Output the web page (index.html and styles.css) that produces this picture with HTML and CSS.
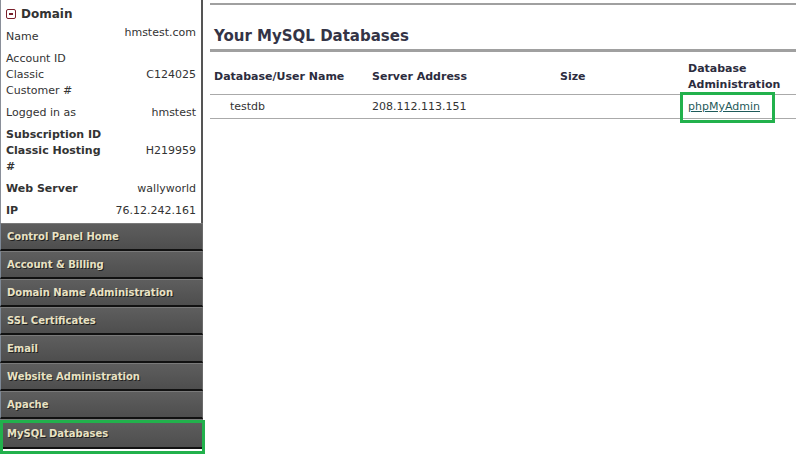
FILE: index.html
```html
<!DOCTYPE html>
<html lang="en">
<head>
    <meta charset="UTF-8">
    <title>MySQL Databases</title>
    <link rel="stylesheet" href="styles.css">
</head>
<body>
    <div class="page">
        <div class="sidebar">
            <!-- Account info box -->
            <div class="info">
                <div class="info-title">
                    <span class="toggle"></span>
                    Domain
                </div>
                <div class="row row-name">
                    <span class="label">Name</span>
                    <span class="value">hmstest.com</span>
                </div>
                <div class="row">
                    <span class="label">Account ID<br>Classic<br>Customer #</span>
                    <span class="value">C124025</span>
                </div>
                <div class="row">
                    <span class="label">Logged in as</span>
                    <span class="value">hmstest</span>
                </div>
                <div class="row">
                    <span class="label bold">Subscription ID<br>Classic Hosting<br>#</span>
                    <span class="value">H219959</span>
                </div>
                <div class="row">
                    <span class="label bold">Web Server</span>
                    <span class="value">wallyworld</span>
                </div>
                <div class="row">
                    <span class="label bold">IP</span>
                    <span class="value">76.12.242.161</span>
                </div>
            </div>

            <!-- Navigation -->
            <div class="menu">
                <a class="menu-item" href="#">Control Panel Home</a>
                <a class="menu-item" href="#">Account &amp; Billing</a>
                <a class="menu-item" href="#">Domain Name Administration</a>
                <a class="menu-item" href="#">SSL Certificates</a>
                <a class="menu-item" href="#">Email</a>
                <a class="menu-item" href="#">Website Administration</a>
                <a class="menu-item" href="#">Apache</a>
                <a class="menu-item active" href="#">MySQL Databases</a>
            </div>
        </div>

        <div class="content">
            <h2 class="heading">Your MySQL Databases</h2>
            <table class="db-table">
                <tr>
                    <th class="col-name">Database/User Name</th>
                    <th class="col-server">Server Address</th>
                    <th class="col-size">Size</th>
                    <th class="col-admin">Database<br>Administration</th>
                </tr>
                <tr>
                    <td class="db-name">testdb</td>
                    <td>208.112.113.151</td>
                    <td></td>
                    <td><a class="admin-link" href="#">phpMyAdmin</a></td>
                </tr>
            </table>
        </div>
    </div>
</body>
</html>
```

FILE: styles.css
```css
body {
    margin: 0;
    background: #fff;
    font-family: "DejaVu Sans", Verdana, sans-serif;
    font-size: 11px;
    color: #333;
}
.page {
    display: flex;
    align-items: flex-start;
}

/* Sidebar */
.sidebar {
    width: 203px;
    flex-shrink: 0;
}
.info {
    border-left: 1px solid #8a8f99;
    border-right: 2px solid #555;
    padding: 6px 5px 4px 5px;
    line-height: 16px;
}
.info-title {
    font-weight: bold;
    font-size: 12px;
    color: #333;
    display: flex;
    align-items: center;
    gap: 5px;
}
.toggle {
    width: 8px;
    height: 8px;
    border: 1px solid #7a1f2b;
    border-radius: 2px;
    position: relative;
}
.toggle::before {
    content: "";
    position: absolute;
    left: 2px;
    right: 2px;
    top: 3px;
    height: 2px;
    background: #7a1f2b;
}
.row {
    display: flex;
    justify-content: space-between;
    align-items: center;
    margin-top: 6px;
}
.row-name {
    align-items: flex-start;
    margin-top: 3px;
}
.row-name .label {
    padding-top: 4px;
}
.bold {
    font-weight: bold;
}

/* Menu */
.menu {
    display: flex;
    flex-direction: column;
}
.menu-item {
    height: 25px;
    line-height: 25px;
    padding-left: 6px;
    background: linear-gradient(#5e5e5e, #4e4e4e);
    border-top: 1px solid #7a7a7a;
    border-bottom: 2px solid #111;
    border-left: 1px solid #7d8896;
    border-right: 1px solid #6a6a6a;
    color: #e9e2c4;
    text-shadow: 1px 1px 0 #222;
    font-weight: bold;
    font-size: 10px;
    text-decoration: none;
}
.menu-item.active {
    position: relative;
    height: 27px;
    line-height: 27px;
    margin-bottom: 5px;
}
.menu-item.active::after {
    content: "";
    position: absolute;
    left: -1px;
    top: 0;
    width: 205px;
    height: 35px;
    box-sizing: border-box;
    border: 3px solid #22b14c;
    border-bottom-width: 4px;
}

/* Content */
.content {
    flex: 1;
    margin-left: 7px;
    border-top: 2px solid #a0a0a0;
    margin-top: 3px;
}
.heading {
    margin: 21px 0 0;
    padding: 0 4px 3px;
    font-size: 15px;
    line-height: 20px;
    color: #343446;
    border-bottom: 3px solid #a0a0a0;
}
.db-table {
    width: 100%;
    border-collapse: collapse;
}
.db-table th {
    text-align: left;
    font-weight: bold;
    color: #2c2c3e;
    line-height: 16px;
    padding: 9px 4px 1px;
    border-bottom: 1px solid #aaa;
    vertical-align: middle;
}
.db-table td {
    padding: 4px;
    line-height: 15px;
    border-bottom: 1px solid #aaa;
}
.col-name {
    width: 150px;
}
.col-server {
    width: 180px;
}
.col-size {
    width: 120px;
}
.db-table td.db-name {
    padding-left: 20px;
}
.admin-link {
    color: #1f5a5a;
    position: relative;
}
.admin-link::after {
    content: "";
    position: absolute;
    left: -8px;
    right: -15px;
    top: -8px;
    bottom: -10px;
    border: 3px solid #22b14c;
}
```
